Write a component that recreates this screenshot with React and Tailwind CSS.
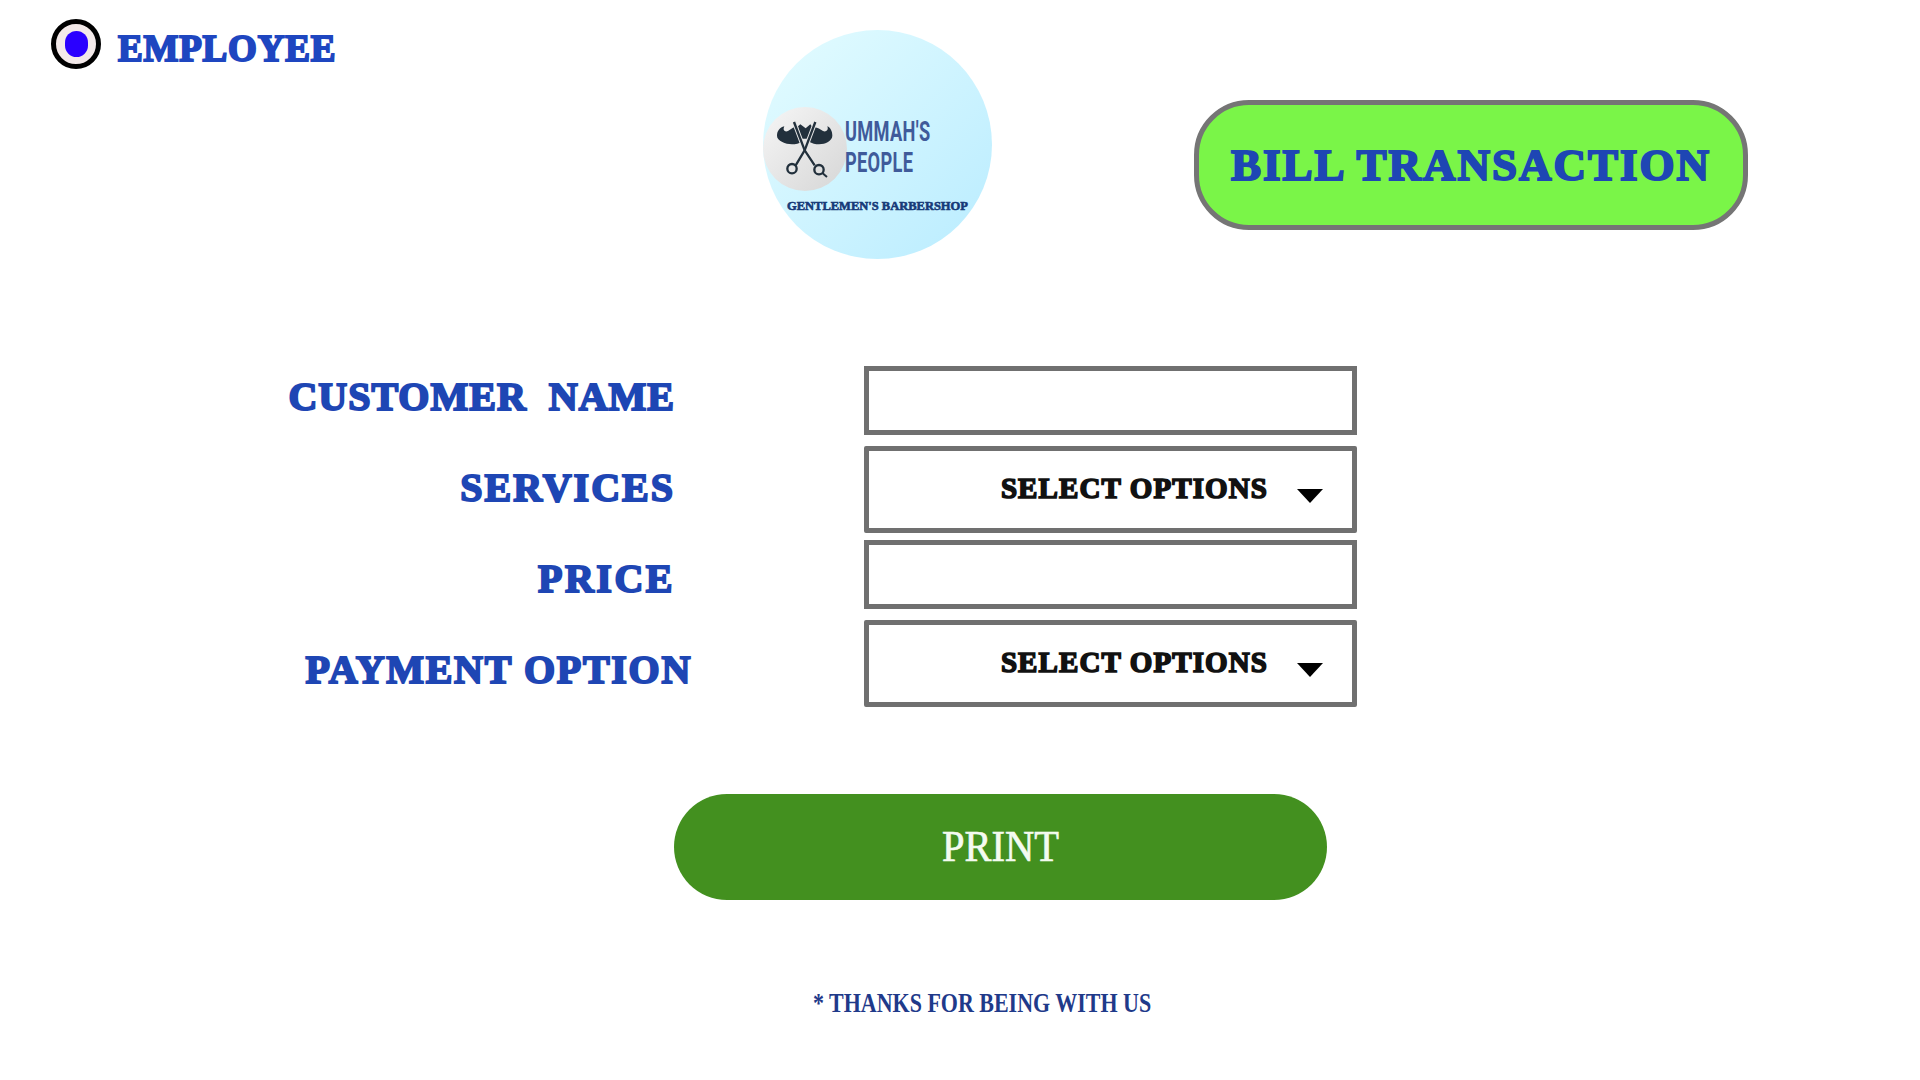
import { useState } from "react";

const fatText = "font-['Liberation_Serif',serif] font-bold [-webkit-text-stroke:2px_currentColor]";

function LogoIcono() {
  return (
    <svg viewBox="10 20 252 252" className="w-[84px] h-[84px]">
      {/* bigote */}
      <path
        d="M52 106 C52 92 60 82 74 78 C68 90 76 96 85 92 C95 87 105 76 115 78 L128 124 C110 134 85 134 68 125 C58 120 52 114 52 106 Z"
        fill="#22303c"
      />
      <path
        d="M218 106 C218 92 212 82 203 78 C208 90 198 96 190 92 C180 87 170 78 160 82 L148 124 C165 134 190 134 205 125 C212 120 218 114 218 106 Z"
        fill="#22303c"
      />
      <path d="M115 78 L122 72 L138 84 L152 72 L160 82 L150 115 L125 115 Z" fill="#22303c" />
      {/* tijeras */}
      <path d="M103 65 L135 150 L165 195" fill="none" stroke="#e6e6e6" strokeWidth="13" />
      <path d="M167 65 L135 150 L108 195" fill="none" stroke="#e6e6e6" strokeWidth="13" />
      <path d="M103 65 L135 150 L165 195" fill="none" stroke="#22303c" strokeWidth="7" />
      <path d="M167 65 L135 150 L108 195" fill="none" stroke="#22303c" strokeWidth="7" />
      <circle cx="97" cy="205" r="14" fill="none" stroke="#22303c" strokeWidth="7" />
      <circle cx="178" cy="208" r="14" fill="none" stroke="#22303c" strokeWidth="7" />
      <path d="M188 218 L202 230" stroke="#22303c" strokeWidth="6" />
    </svg>
  );
}

function Selector({ valor }) {
  return (
    <button className="h-[87px] w-full border-[5px] border-[#707070] rounded-[2px] bg-white flex items-center justify-end pr-[29px] pb-[3px]">
      <span className="font-['Liberation_Serif',serif] font-bold [-webkit-text-stroke:1.6px_currentColor] tracking-[1.1px] text-[29px] leading-none text-[#111] mr-[29px]">{valor}</span>
      <span className="mt-[15px] w-0 h-0 border-l-[13.5px] border-r-[13.5px] border-t-[14px] border-l-transparent border-r-transparent border-t-black"></span>
    </button>
  );
}

function App() {
  const [formulario, setFormulario] = useState({ nombre: "", precio: "" });

  const manejarCambio = (e) => {
    setFormulario({
      ...formulario,
      [e.target.name]: e.target.value,
    });
  };

  return (
    <div className="w-[1920px] h-[1080px] overflow-hidden bg-white">
      {/* Cabecera */}
      <div className="flex items-start pl-[51px] pt-[19px] h-[366px]">
        <div className="w-[712px] flex items-center">
          <div className="w-[50px] h-[50px] rounded-full border-[5px] border-black bg-[#f3e9e9] flex items-center justify-center">
            <div className="w-[23px] h-[26px] rounded-full bg-[#2a00ff]"></div>
          </div>
          <span className={`${fatText} ml-[17px] mt-[8px] text-[37px] tracking-[0.8px] leading-none text-[#1e46c0]`}>EMPLOYEE</span>
        </div>

        <div className="mt-[11px] w-[229px] h-[229px] rounded-full bg-gradient-to-br from-[#e4fcff] to-[#b9ecff] pt-[77px] flex flex-col">
          <div className="flex items-center">
            <div className="w-[84px] h-[84px] rounded-full bg-gradient-to-br from-[#f6f6f6] to-[#d6d6d6] shrink-0">
              <LogoIcono />
            </div>
            <div className="origin-left scale-x-[0.65] -ml-[2px] -mt-[5px] font-['Roboto',sans-serif] font-bold text-[28px] leading-[31px] text-[#3f5a9a] tracking-[0.5px]">
              <div>UMMAH'S</div>
              <div>PEOPLE</div>
            </div>
          </div>
          <div className="font-['Liberation_Serif',serif] font-bold [-webkit-text-stroke:0.6px_currentColor] text-[12.5px] leading-none text-[#173a78] text-center mt-[9px] whitespace-nowrap">
            GENTLEMEN'S BARBERSHOP
          </div>
        </div>

        <button className="ml-[202px] mt-[81px] w-[554px] h-[130px] rounded-[55px] border-[5px] border-[#757575] bg-[#7af548] flex items-center justify-center">
          <span className={`${fatText} text-[45px] tracking-[2px] leading-none text-[#1e46b4] whitespace-nowrap`}>BILL TRANSACTION</span>
        </button>
      </div>

      {/* Formulario */}
      <div className="flex items-start">
        <div className="w-[675px] flex flex-col items-end pt-[11px] gap-[51px] shrink-0">
          <label className={`${fatText} text-[40px] tracking-[1px] leading-[40px] text-[#1e46b4] whitespace-pre`}>CUSTOMER  NAME</label>
          <label className={`${fatText} text-[40px] tracking-[2px] leading-[40px] text-[#1e46b4]`}>SERVICES</label>
          <label className={`${fatText} text-[40px] tracking-[2.5px] leading-[40px] text-[#1e46b4]`}>PRICE</label>
          <label className={`${fatText} text-[40px] tracking-[1.7px] leading-[40px] text-[#1e46b4] whitespace-nowrap mr-[-17px]`}>PAYMENT OPTION</label>
        </div>

        <div className="ml-[189px] w-[493px] flex flex-col">
          <input
            name="nombre"
            value={formulario.nombre}
            onChange={manejarCambio}
            className="h-[69px] w-full border-[5px] border-[#707070] bg-white"
          />
          <div className="mt-[11px]">
            <Selector valor="SELECT OPTIONS" />
          </div>
          <input
            name="precio"
            value={formulario.precio}
            onChange={manejarCambio}
            className="mt-[7px] h-[69px] w-full border-[5px] border-[#707070] bg-white"
          />
          <div className="mt-[11px]">
            <Selector valor="SELECT OPTIONS" />
          </div>
        </div>
      </div>

      {/* Botón imprimir */}
      <div className="pl-[674px] mt-[87px]">
        <button className="w-[653px] h-[106px] rounded-full bg-[#43901f] text-[#f4fbf0]">
          <span className="inline-block scale-x-[0.92] font-['Liberation_Serif',serif] [-webkit-text-stroke:0.7px_currentColor] text-[44px] leading-none">PRINT</span>
        </button>
      </div>

      <p className="origin-left scale-x-[0.785] mt-[88px] ml-[813px] font-['Liberation_Serif',serif] font-bold text-[28px] leading-[30px] text-[#1f3a8a] whitespace-nowrap">
        * THANKS FOR BEING WITH US
      </p>
    </div>
  );
}

export default App;
